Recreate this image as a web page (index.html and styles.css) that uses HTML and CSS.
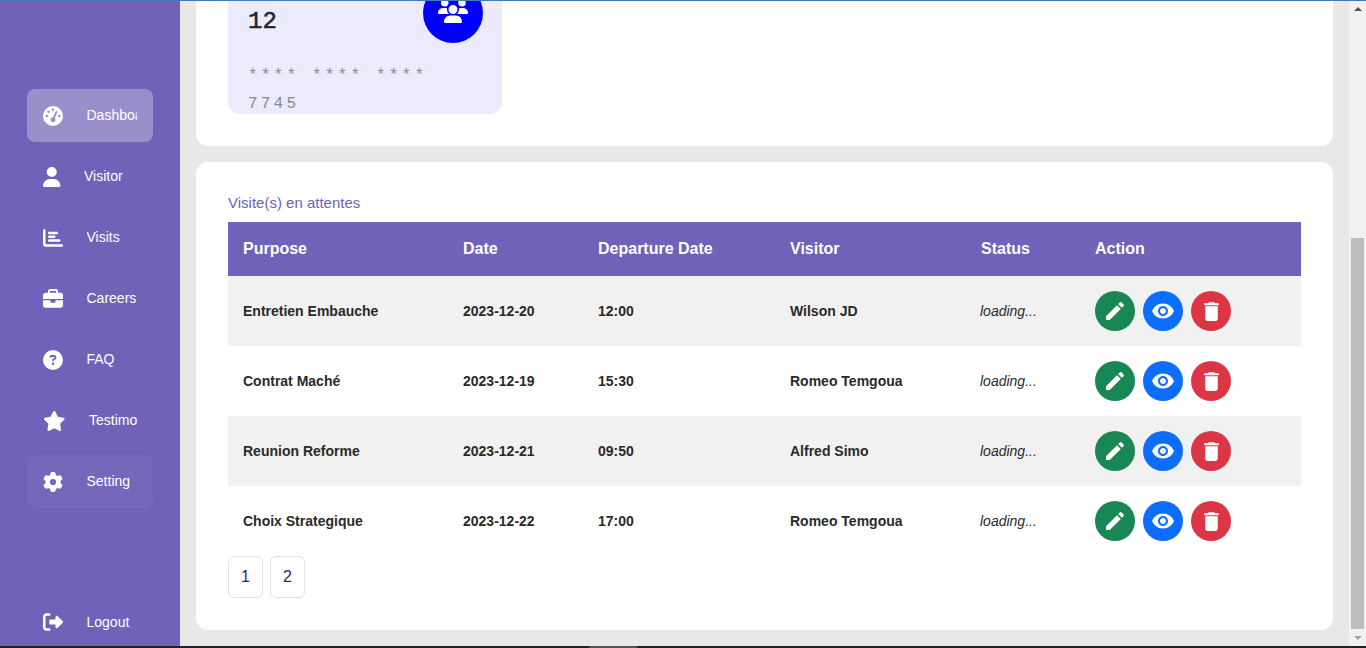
FILE: index.html
```html
<!DOCTYPE html>
<html lang="en">
<head>
<meta charset="utf-8">
<title>Dashboard</title>
<link rel="stylesheet" href="styles.css">
</head>
<body>
<div class="topline"></div>
<div class="app">
  <aside class="sidebar">
    <nav class="nav">
      <a class="nav-item active">
        <svg class="ico" width="20" height="20" viewBox="0 0 512 512"><path d="M0 256a256 256 0 1 1 512 0A256 256 0 1 1 0 256zM288 96a32 32 0 1 0 -64 0 32 32 0 1 0 64 0zM256 416c35.300 0 64-28.700 64-64c0-17.400-6.900-33.100-18.100-44.600L366 161.700c5.300-12.100-.2-26.300-12.300-31.600s-26.300 .2-31.600 12.300L257.900 288c-.6 0-1.300 0-1.900 0c-35.300 0-64 28.700-64 64s28.700 64 64 64zM176 144a32 32 0 1 0 -64 0 32 32 0 1 0 64 0zM96 288a32 32 0 1 0 0-64 32 32 0 1 0 0 64zm352-32a32 32 0 1 0 -64 0 32 32 0 1 0 64 0z"/></svg>
        <span class="label">Dashboard</span>
      </a>
      <a class="nav-item">
        <svg class="ico" width="17.5" height="20" viewBox="0 0 448 512"><path d="M224 256A128 128 0 1 0 224 0a128 128 0 1 0 0 256zm-45.700 48C79.800 304 0 383.800 0 482.300C0 498.700 13.300 512 29.700 512H418.300c16.400 0 29.700-13.300 29.700-29.700C448 383.800 368.200 304 269.700 304H178.300z"/></svg>
        <span class="label">Visitor</span>
      </a>
      <a class="nav-item">
        <svg class="ico" width="20" height="20" viewBox="0 0 512 512"><path d="M32 32c17.700 0 32 14.300 32 32V400c0 8.800 7.200 16 16 16H480c17.700 0 32 14.300 32 32s-14.300 32-32 32H80c-44.200 0-80-35.800-80-80V64C0 46.300 14.300 32 32 32zm96 96c0-17.700 14.300-32 32-32l192 0c17.700 0 32 14.300 32 32s-14.300 32-32 32l-192 0c-17.700 0-32-14.300-32-32zm32 64H288c17.700 0 32 14.300 32 32s-14.300 32-32 32H160c-17.700 0-32-14.300-32-32s14.300-32 32-32zm0 96H416c17.700 0 32 14.300 32 32s-14.300 32-32 32H160c-17.700 0-32-14.300-32-32s14.300-32 32-32z"/></svg>
        <span class="label">Visits</span>
      </a>
      <a class="nav-item">
        <svg class="ico" width="20" height="20" viewBox="0 0 512 512"><path d="M184 48H328c4.400 0 8 3.600 8 8V96H176V56c0-4.400 3.600-8 8-8zm-56 8V96H64C28.700 96 0 124.700 0 160v96H192 320 512V160c0-35.300-28.700-64-64-64H384V56c0-30.900-25.100-56-56-56H184c-30.900 0-56 25.100-56 56zM512 288H320v32c0 17.700-14.300 32-32 32H224c-17.700 0-32-14.300-32-32V288H0V416c0 35.300 28.700 64 64 64H448c35.300 0 64-28.700 64-64V288z"/></svg>
        <span class="label">Careers</span>
      </a>
      <a class="nav-item">
        <svg class="ico" width="20" height="20" viewBox="0 0 512 512"><path d="M256 512A256 256 0 1 0 256 0a256 256 0 1 0 0 512zM169.800 165.300c7.900-22.300 29.100-37.300 52.800-37.300h58.300c34.900 0 63.100 28.300 63.100 63.100c0 22.600-12.100 43.500-31.700 54.800L280 264.400c-.2 13-10.900 23.600-24 23.600c-13.300 0-24-10.700-24-24V250.500c0-8.600 4.600-16.500 12.100-20.800l44.300-25.400c4.700-2.700 7.600-7.700 7.600-13.100c0-8.400-6.800-15.100-15.100-15.100H222.600c-3.400 0-6.400 2.100-7.500 5.300l-.4 1.200c-4.400 12.500-18.200 19-30.600 14.600s-19-18.200-14.600-30.600l.4-1.200zM224 352a32 32 0 1 1 64 0 32 32 0 1 1 -64 0z"/></svg>
        <span class="label">FAQ</span>
      </a>
      <a class="nav-item">
        <svg class="ico" width="22.500" height="20" viewBox="0 0 576 512"><path d="M316.900 18C311.600 7 300.400 0 288.100 0s-23.400 7-28.800 18L195 150.300 51.400 171.500c-12 1.800-22 10.200-25.700 21.700s-.7 24.200 7.900 32.700L137.800 329 113.200 474.700c-2 12 3 24.200 12.900 31.300s23 8 33.800 2.300l128.300-68.500 128.300 68.500c10.800 5.700 23.900 4.900 33.800-2.300s14.900-19.300 12.900-31.300L438.500 329 542.700 225.900c8.600-8.500 11.700-21.200 7.900-32.700s-13.700-19.900-25.700-21.700L381.200 150.300 316.900 18z"/></svg>
        <span class="label">Testimonials</span>
      </a>
      <a class="nav-item soft">
        <svg class="ico" width="20" height="20" viewBox="0 0 512 512"><path d="M495.900 166.600c3.200 8.700 .5 18.400-6.400 24.600l-43.300 39.400c1.100 8.300 1.700 16.800 1.700 25.400s-.6 17.100-1.700 25.400l43.300 39.400c6.900 6.200 9.600 15.900 6.400 24.600c-4.400 11.900-9.700 23.300-15.800 34.300l-4.700 8.100c-6.600 11-14 21.400-22.100 31.200c-5.900 7.200-15.700 9.600-24.500 6.800l-55.700-17.700c-13.400 10.300-28.200 18.900-44 25.400l-12.500 57.100c-2 9.100-9 16.300-18.200 17.800c-13.800 2.300-28 3.500-42.500 3.500s-28.700-1.200-42.500-3.500c-9.200-1.500-16.200-8.700-18.200-17.800l-12.500-57.100c-15.800-6.500-30.600-15.100-44-25.400L83.100 425.900c-8.800 2.800-18.600 .3-24.500-6.800c-8.100-9.800-15.500-20.200-22.100-31.200l-4.700-8.100c-6.100-11-11.400-22.400-15.800-34.300c-3.200-8.700-.5-18.400 6.400-24.600l43.300-39.400C64.600 273.100 64 264.600 64 256s.6-17.100 1.700-25.400L22.400 191.200c-6.900-6.200-9.600-15.900-6.400-24.600c4.400-11.900 9.700-23.300 15.800-34.300l4.700-8.100c6.600-11 14-21.400 22.100-31.200c5.900-7.200 15.700-9.600 24.500-6.800l55.700 17.700c13.400-10.300 28.200-18.900 44-25.400l12.500-57.100c2-9.100 9-16.300 18.200-17.800C227.300 1.200 241.500 0 256 0s28.700 1.200 42.500 3.500c9.200 1.500 16.200 8.700 18.200 17.800l12.500 57.100c15.800 6.500 30.600 15.100 44 25.400l55.700-17.700c8.800-2.800 18.600-.3 24.500 6.800c8.100 9.800 15.500 20.200 22.100 31.200l4.700 8.100c6.100 11 11.400 22.400 15.800 34.300zM256 336a80 80 0 1 0 0-160 80 80 0 1 0 0 160z"/></svg>
        <span class="label">Setting</span>
      </a>
    </nav>
    <a class="nav-item logout">
      <svg class="ico" width="20" height="20" viewBox="0 0 512 512"><path d="M377.900 105.900L500.700 228.700c7.200 7.200 11.300 17.100 11.300 27.300s-4.100 20.100-11.300 27.300L377.900 406.100c-6.400 6.400-15 9.900-24 9.900c-18.700 0-33.900-15.200-33.900-33.900V320H192c-17.700 0-32-14.300-32-32V224c0-17.700 14.300-32 32-32H320V129.900c0-18.700 15.200-33.900 33.900-33.900c9 0 17.600 3.600 24 9.900zM160 96H96c-17.700 0-32 14.300-32 32V384c0 17.700 14.300 32 32 32h64c17.700 0 32 14.300 32 32s-14.300 32-32 32H96c-53 0-96-43-96-96V128C0 75 43 32 96 32h64c17.700 0 32 14.300 32 32s-14.300 32-32 32z"/></svg>
      <span class="label">Logout</span>
    </a>
  </aside>

  <main class="main">
    <section class="panel panel-top">
      <div class="stat-card">
        <div class="stat-head">
          <span class="stat-num">12</span>
          <span class="stat-circle">
            <svg class="stat-icon" width="30" height="24" viewBox="0 0 640 512" fill="#fff"><path d="M144 0a80 80 0 1 1 0 160A80 80 0 1 1 144 0zM512 0a80 80 0 1 1 0 160A80 80 0 1 1 512 0zM0 298.700C0 239.800 47.800 192 106.700 192h42.700c15.900 0 31 3.500 44.600 9.700c-1.300 7.200-1.900 14.700-1.900 22.300c0 38.200 16.800 72.500 43.300 96c-.2 0-.4 0-.7 0H21.300C9.600 320 0 310.400 0 298.700zM405.300 320c-.2 0-.4 0-.7 0c26.600-23.500 43.300-57.800 43.300-96c0-7.600-.7-15-1.900-22.300c13.600-6.300 28.700-9.700 44.600-9.700h42.700C592.200 192 640 239.800 640 298.700c0 11.800-9.600 21.300-21.300 21.300H405.300zM224 224a96 96 0 1 1 192 0 96 96 0 1 1 -192 0zM128 485.300C128 411.700 187.700 352 261.300 352H378.700C452.300 352 512 411.700 512 485.300c0 14.700-11.900 26.700-26.700 26.700H154.700c-14.700 0-26.700-11.900-26.700-26.700z"/></svg>
          </span>
        </div>
        <div class="stat-mask">**** **** **** 7745</div>
      </div>
    </section>

    <section class="panel panel-table">
      <h2 class="panel-title">Visite(s) en attentes</h2>
      <table class="visits">
        <colgroup>
          <col class="c1"><col class="c2"><col class="c3"><col class="c4"><col class="c5"><col class="c6">
        </colgroup>
        <thead>
          <tr><th>Purpose</th><th>Date</th><th>Departure Date</th><th>Visitor</th><th>Status</th><th>Action</th></tr>
        </thead>
        <tbody>
          <tr>
            <td>Entretien Embauche</td><td>2023-12-20</td><td>12:00</td><td>Wilson JD</td><td class="status">loading...</td>
            <td><div class="actions">
              <button class="act green"><svg width="24" height="24" viewBox="0 0 24 24"><path d="M3 17.250V21h3.750L17.810 9.940l-3.750-3.750L3 17.250zM20.710 7.040c.39-.39.39-1.020 0-1.410l-2.340-2.340c-.39-.39-1.020-.39-1.410 0l-1.830 1.830 3.750 3.750 1.830-1.830z"/></svg></button>
              <button class="act blue"><svg width="24" height="24" viewBox="0 0 24 24"><path d="M12 4.500C7 4.500 2.730 7.610 1 12c1.730 4.390 6 7.500 11 7.500s9.270-3.110 11-7.500c-1.730-4.390-6-7.500-11-7.500zM12 17c-2.760 0-5-2.240-5-5s2.240-5 5-5 5 2.240 5 5-2.240 5-5 5zm0-8c-1.660 0-3 1.340-3 3s1.340 3 3 3 3-1.340 3-3-1.340-3-3-3z"/></svg></button>
              <button class="act red"><svg width="24" height="24" viewBox="0 0 24 24"><path d="M6 19c0 1.100.9 2 2 2h8c1.100 0 2-.9 2-2V7H6v12zM19 4h-3.500l-1-1h-5l-1 1H5v2h14V4z"/></svg></button>
            </div></td>
          </tr>
          <tr>
            <td>Contrat Maché</td><td>2023-12-19</td><td>15:30</td><td>Romeo Temgoua</td><td class="status">loading...</td>
            <td><div class="actions">
              <button class="act green"><svg width="24" height="24" viewBox="0 0 24 24"><path d="M3 17.250V21h3.750L17.810 9.940l-3.750-3.750L3 17.250zM20.710 7.040c.39-.39.39-1.020 0-1.410l-2.340-2.340c-.39-.39-1.020-.39-1.410 0l-1.830 1.830 3.750 3.750 1.830-1.830z"/></svg></button>
              <button class="act blue"><svg width="24" height="24" viewBox="0 0 24 24"><path d="M12 4.500C7 4.500 2.730 7.610 1 12c1.730 4.390 6 7.500 11 7.500s9.270-3.110 11-7.500c-1.730-4.390-6-7.500-11-7.500zM12 17c-2.760 0-5-2.240-5-5s2.240-5 5-5 5 2.240 5 5-2.240 5-5 5zm0-8c-1.660 0-3 1.340-3 3s1.340 3 3 3 3-1.340 3-3-1.340-3-3-3z"/></svg></button>
              <button class="act red"><svg width="24" height="24" viewBox="0 0 24 24"><path d="M6 19c0 1.100.9 2 2 2h8c1.100 0 2-.9 2-2V7H6v12zM19 4h-3.500l-1-1h-5l-1 1H5v2h14V4z"/></svg></button>
            </div></td>
          </tr>
          <tr>
            <td>Reunion Reforme</td><td>2023-12-21</td><td>09:50</td><td>Alfred Simo</td><td class="status">loading...</td>
            <td><div class="actions">
              <button class="act green"><svg width="24" height="24" viewBox="0 0 24 24"><path d="M3 17.250V21h3.750L17.810 9.940l-3.750-3.750L3 17.250zM20.710 7.040c.39-.39.39-1.020 0-1.410l-2.340-2.340c-.39-.39-1.020-.39-1.410 0l-1.830 1.830 3.750 3.750 1.830-1.830z"/></svg></button>
              <button class="act blue"><svg width="24" height="24" viewBox="0 0 24 24"><path d="M12 4.500C7 4.500 2.730 7.610 1 12c1.730 4.390 6 7.500 11 7.500s9.270-3.110 11-7.500c-1.730-4.390-6-7.500-11-7.500zM12 17c-2.760 0-5-2.240-5-5s2.240-5 5-5 5 2.240 5 5-2.240 5-5 5zm0-8c-1.660 0-3 1.340-3 3s1.340 3 3 3 3-1.340 3-3-1.340-3-3-3z"/></svg></button>
              <button class="act red"><svg width="24" height="24" viewBox="0 0 24 24"><path d="M6 19c0 1.100.9 2 2 2h8c1.100 0 2-.9 2-2V7H6v12zM19 4h-3.500l-1-1h-5l-1 1H5v2h14V4z"/></svg></button>
            </div></td>
          </tr>
          <tr>
            <td>Choix Strategique</td><td>2023-12-22</td><td>17:00</td><td>Romeo Temgoua</td><td class="status">loading...</td>
            <td><div class="actions">
              <button class="act green"><svg width="24" height="24" viewBox="0 0 24 24"><path d="M3 17.250V21h3.750L17.810 9.940l-3.750-3.750L3 17.250zM20.710 7.040c.39-.39.39-1.020 0-1.410l-2.340-2.340c-.39-.39-1.020-.39-1.410 0l-1.830 1.830 3.750 3.750 1.830-1.830z"/></svg></button>
              <button class="act blue"><svg width="24" height="24" viewBox="0 0 24 24"><path d="M12 4.500C7 4.500 2.730 7.610 1 12c1.730 4.390 6 7.500 11 7.500s9.270-3.110 11-7.500c-1.730-4.390-6-7.500-11-7.500zM12 17c-2.760 0-5-2.240-5-5s2.240-5 5-5 5 2.240 5 5-2.240 5-5 5zm0-8c-1.660 0-3 1.340-3 3s1.340 3 3 3 3-1.340 3-3-1.340-3-3-3z"/></svg></button>
              <button class="act red"><svg width="24" height="24" viewBox="0 0 24 24"><path d="M6 19c0 1.100.9 2 2 2h8c1.100 0 2-.9 2-2V7H6v12zM19 4h-3.500l-1-1h-5l-1 1H5v2h14V4z"/></svg></button>
            </div></td>
          </tr>
        </tbody>
      </table>
      <div class="pager">
        <a class="page">1</a>
        <a class="page">2</a>
      </div>
    </section>
  </main>

  <div class="scrollbar">
    <div class="sb-btn"><span class="tri-up"></span></div>
    <div class="sb-track"><div class="sb-thumb"></div></div>
    <div class="sb-btn"><span class="tri-down"></span></div>
  </div>
</div>
<div class="taskbar"><span class="task-item"></span></div>
</body>
</html>
```

FILE: styles.css
```css
* { box-sizing: border-box; }
html, body { margin: 0; height: 100%; overflow: hidden; }
body {
  font-family: "Liberation Sans", Arial, sans-serif;
  display: flex;
  flex-direction: column;
  background: #222;
  color: #212529;
  position: relative;
}
.topline {
  position: absolute;
  top: 0; left: 0; right: 0;
  height: 1px;
  background: #4279ba;
  z-index: 5;
}
.app { flex: 1; display: flex; min-height: 0; overflow: hidden; }

.sidebar {
  width: 180px;
  flex: none;
  background: #7062b8;
  padding: 89px 27px 0;
  display: flex;
  flex-direction: column;
}
.nav { display: flex; flex-direction: column; gap: 8px; }
.nav-item {
  height: 53px;
  padding: 0 16px;
  border-radius: 8px;
  display: flex;
  align-items: center;
  gap: 23.500px;
  color: #fff;
  font-size: 14px;
  overflow: hidden;
}
.nav-item.active { background: #9a8fcb; }
.nav-item.soft { background: #7667bb; }
.nav-item.logout { margin-top: 89px; }
.ico { flex: none; fill: #fff; }
.label { flex: 1; min-width: 0; white-space: nowrap; overflow: hidden; margin-bottom: 2px; }
.logout .label { margin-bottom: 0; }

.main {
  flex: 1;
  min-width: 0;
  background: #e9e7e8;
  padding: 0 16px;
  display: flex;
  flex-direction: column;
  gap: 16px;
  overflow: hidden;
}
.panel { background: #fff; border-radius: 12px; padding: 32px; flex: none; }
.panel-top { margin-top: -72px; height: 218px; }

.stat-card {
  width: 274px;
  height: 154px;
  background: #ecebfd;
  border-radius: 12px;
  padding: 23px 19px 0 20px;
  overflow: hidden;
}
.stat-head { display: flex; justify-content: space-between; align-items: flex-start; }
.stat-num {
  font-family: "Liberation Mono", monospace;
  font-size: 24px;
  font-weight: 400;
  line-height: 26px;
  padding-top: 26px;
  color: #212529;
  -webkit-text-stroke: .5px #212529;
}
.stat-circle {
  width: 60px; height: 60px;
  border-radius: 50%;
  background: #00f;
  display: flex;
  align-items: center;
  justify-content: center;
}
.stat-icon { margin-bottom: 4px; }
.stat-mask {
  margin-top: 19px;
  font-family: "Liberation Mono", monospace;
  font-size: 16px;
  line-height: 28px;
  letter-spacing: 3.2px;
  color: #8a8a8f;
}

.panel-title {
  margin: 0 0 11px;
  font-size: 15px;
  font-weight: 400;
  line-height: 17px;
  color: #7062b8;
}
.visits {
  width: 1073px;
  border-collapse: collapse;
  table-layout: fixed;
}
.c1 { width: 220px; }
.c2 { width: 135px; }
.c3 { width: 192px; }
.c4 { width: 191px; }
.c5 { width: 114px; }
.c6 { width: 221px; }
.visits th {
  height: 54px;
  padding: 0 15px;
  background: #7062b8;
  color: #fff;
  font-size: 16px;
  font-weight: 700;
  text-align: left;
}
.visits td {
  height: 70px;
  padding: 0 15px;
  font-size: 14px;
  font-weight: 700;
  color: #2a2a2a;
}
.visits tbody tr:nth-child(odd) { background: #f1f1f1; }
.visits td.status { font-weight: 400; font-style: italic; padding-left: 14px; }

.actions { display: flex; gap: 8px; }
.act {
  width: 40px; height: 40px;
  border: 0;
  padding: 0;
  border-radius: 50%;
  display: flex;
  align-items: center;
  justify-content: center;
}
.act svg { fill: #fff; }
.red svg { width: 25px; height: 25px; }
.green { background: #198754; }
.blue { background: #0d6efd; }
.red { background: #dc3545; }

.pager { display: flex; gap: 7px; }
.page {
  width: 35px; height: 42px;
  border: 1px solid #dee2e6;
  border-radius: 6px;
  display: flex;
  align-items: center;
  justify-content: center;
  font-size: 16px;
  color: #2c2a6b;
}

.scrollbar {
  width: 17px;
  flex: none;
  background: #f1f1f1;
  display: flex;
  flex-direction: column;
}
.sb-btn { height: 17px; flex: none; display: flex; align-items: center; justify-content: center; }
.tri-up, .tri-down { width: 0; height: 0; border-left: 4px solid transparent; border-right: 4px solid transparent; }
.tri-up { border-bottom: 4px solid #505050; }
.tri-down { border-top: 4px solid #a3a3a3; }
.sb-track { flex: 1; padding: 221px 2px 0; display: flex; }
.sb-thumb { flex: 1; background: #bdbdbd; }

.taskbar { height: 2px; flex: none; background: #222; display: flex; }
.task-item { width: 48px; margin-left: 589px; background: #555; }
```
